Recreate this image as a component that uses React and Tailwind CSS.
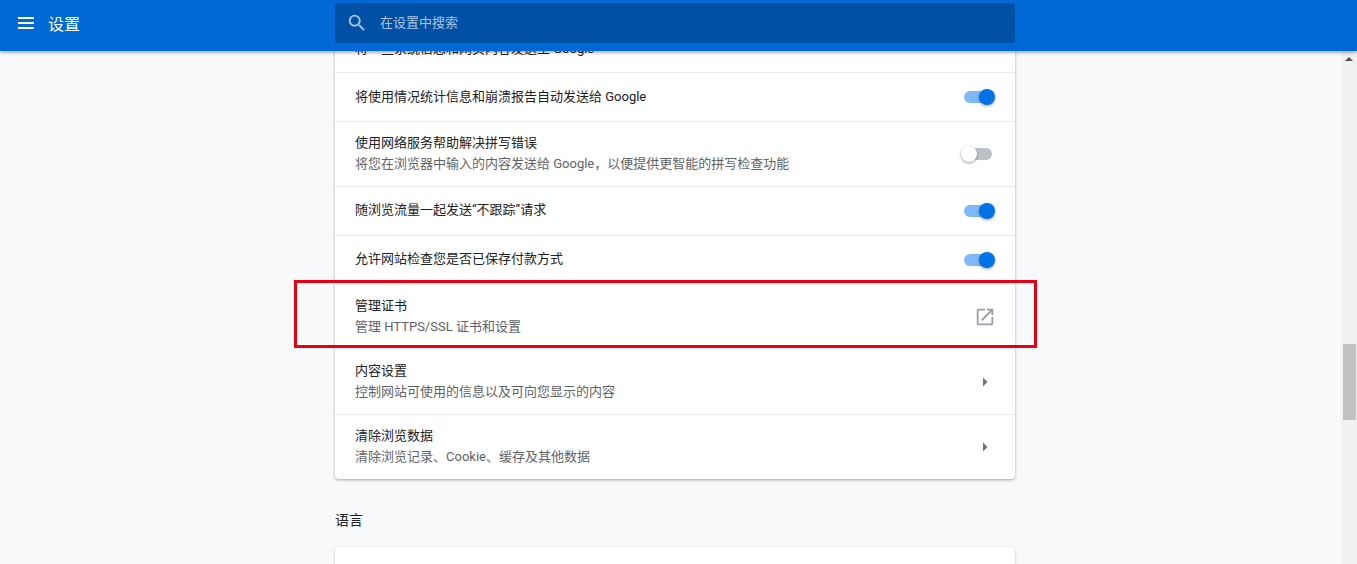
import React from 'react';

const Toggle = ({ on }) => (
  <div className="relative w-[34px] h-[12px] shrink-0">
    <div className={`ml-[3px] h-[12px] w-[28px] rounded-full ${on ? 'bg-[#7fb8f6]' : 'bg-[#bdc1c6]'}`} />
    <div
      className={`absolute top-[-2px] h-4 w-4 rounded-full shadow-[0_1px_3px_rgba(0,0,0,0.4)] ${
        on ? 'left-[18px] bg-[#0073e6]' : 'left-0 bg-white'
      }`}
    />
  </div>
);

const MenuIcon = () => (
  <svg width="16" height="12" viewBox="0 0 16 12" fill="#ffffff" className="mb-[3px]">
    <rect x="0" y="0" width="16" height="2" />
    <rect x="0" y="5" width="16" height="2" />
    <rect x="0" y="10" width="16" height="2" />
  </svg>
);

const SearchIcon = () => (
  <svg width="22" height="22" viewBox="0 0 24 24" fill="#a9c4e4">
    <path d="M15.5 14h-.79l-.28-.27A6.47 6.47 0 0 0 16 9.5 6.5 6.5 0 1 0 9.5 16c1.61 0 3.09-.59 4.23-1.57l.27.28v.79l5 4.99L20.49 19l-4.99-5zm-6 0C7.01 14 5 11.99 5 9.5S7.01 5 9.5 5 14 7.01 14 9.5 11.99 14 9.5 14z" />
  </svg>
);

const ExternalIcon = () => (
  <svg width="22" height="22" viewBox="0 0 24 24" fill="#9aa0a6" className="mr-[-1px]">
    <path d="M19 19H5V5h7V3H5a2 2 0 0 0-2 2v14a2 2 0 0 0 2 2h14c1.1 0 2-.9 2-2v-7h-2v7zM14 3v2h3.59l-9.83 9.83 1.41 1.41L19 6.41V10h2V3h-7z" />
  </svg>
);

const Arrow = () => (
  <svg width="24" height="24" viewBox="0 0 24 24" fill="#6e7378" className="mr-[-2px]">
    <path d="M10 7.5v9l4.5-4.5z" />
  </svg>
);

const Row = ({ title, sub, right, height, textClass }) => (
  <div className={`flex items-center justify-between px-5 border-t border-[#e8eaed] first:border-t-0 ${height}`}>
    <div className={textClass}>
      <div className="text-[13px] leading-[20px] text-[#202124]">{title}</div>
      {sub && <div className="mt-[1px] text-[13px] leading-[20px] text-[#5f6368]">{sub}</div>}
    </div>
    {right}
  </div>
);

const rows = [
  { title: '将一些系统信息和网页内容发送至 Google', right: null, height: 'h-[49px]', textClass: 'mt-[3px]' },
  { title: '将使用情况统计信息和崩溃报告自动发送给 Google', right: <Toggle on />, height: 'h-[49px]' },
  {
    title: '使用网络服务帮助解决拼写错误',
    sub: '将您在浏览器中输入的内容发送给 Google，以便提供更智能的拼写检查功能',
    right: <Toggle />,
    height: 'h-[65px]',
    textClass: 'pb-[1px]',
  },
  { title: '随浏览流量一起发送“不跟踪”请求', right: <Toggle on />, height: 'h-[49px]', textClass: 'mb-[2px]' },
  { title: '允许网站检查您是否已保存付款方式', right: <Toggle on />, height: 'h-[49px]', textClass: 'mb-[2px]' },
  { title: '管理证书', sub: '管理 HTTPS/SSL 证书和设置', right: <ExternalIcon />, height: 'h-[65px]', textClass: 'pb-[1px]' },
  { title: '内容设置', sub: '控制网站可使用的信息以及可向您显示的内容', right: <Arrow />, height: 'h-[65px]', textClass: 'pb-[1px]' },
  { title: '清除浏览数据', sub: '清除浏览记录、Cookie、缓存及其他数据', right: <Arrow />, height: 'h-[65px]', textClass: 'pb-[1px]' },
];

export default function App() {
  return (
    <div className="relative h-[564px] overflow-hidden flex flex-col bg-[#f8f9fa] font-['Roboto','Noto_Sans_CJK_SC',sans-serif]">
      {/* Header */}
      <header className="relative z-10 h-[51px] shrink-0 flex bg-[#0069d6] shadow-[0_1px_4px_rgba(0,0,0,0.45)]">
        <div className="w-[335px] flex items-center pl-[18px] pb-[2px] text-white">
          <MenuIcon />
          <span className="ml-[14px] text-[16px]">设置</span>
        </div>
        <div className="mt-[3px] w-[680px] h-[40px] rounded-[2px] bg-[#0050a5] flex items-center pl-[11px] text-[#a9c4e4]">
          <SearchIcon />
          <span className="ml-[12px] text-[13px]">在设置中搜索</span>
        </div>
      </header>

      <div className="flex flex-1 min-h-0">
        {/* Page content, scrolled */}
        <main className="flex-1 overflow-hidden pl-[335px]">
          <div className="w-[680px] mt-[-28px]">
            <section className="bg-white rounded-[4px] shadow-[0_1px_3px_rgba(60,64,67,0.45)]">
              {rows.map((row) => (
                <Row key={row.title} {...row} />
              ))}
            </section>
            <h2 className="mt-[31px] text-[14px] leading-[20px] text-[#202124]">语言</h2>
            <section className="mt-[17px] h-[80px] bg-white rounded-[4px] shadow-[0_1px_3px_rgba(60,64,67,0.3)]" />
          </div>
        </main>

        {/* Scrollbar */}
        <div className="w-[16px] shrink-0 bg-[#f1f1f1] relative">
          <div className="absolute left-[4px] top-[6px] w-0 h-0 border-x-[4px] border-x-transparent border-b-[4px] border-b-[#505050]" />
          <div className="absolute left-[2px] top-[293px] w-[13px] h-[76px] bg-[#c1c1c1]" />
        </div>
      </div>

      {/* Red highlight drawn over the screenshot */}
      <div className="absolute left-[294px] top-[280px] w-[743px] h-[68px] border-[3px] border-[#e60012] z-20" />
    </div>
  );
}
